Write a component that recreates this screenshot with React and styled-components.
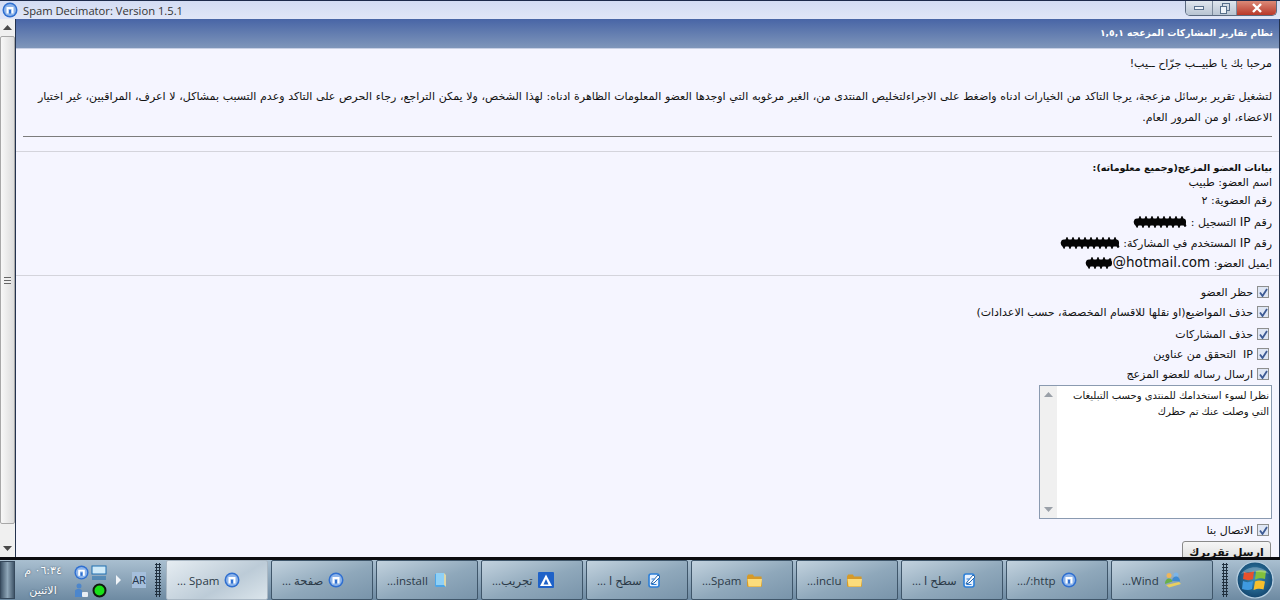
import React from "react";
import styled, { createGlobalStyle } from "styled-components";

const arabicFont = `"DejaVu Sans", "Noto Sans", sans-serif`;
const uiFont = `"Open Sans", "Noto Sans", "DejaVu Sans", sans-serif`;

const GlobalStyle = createGlobalStyle`
  html, body {
    margin: 0;
    padding: 0;
    background: #f5f5ff;
    overflow: hidden;
  }
  * {
    box-sizing: border-box;
  }
`;

// مربع الماكثون الازرق
function MaxthonIcon({ size = 16 }) {
  return (
    <svg width={size} height={size} viewBox="0 0 16 16">
      <circle cx="8" cy="8" r="7.5" fill="#2f6fd0" />
      <circle cx="8" cy="8" r="6" fill="#8db4ea" />
      <path d="M4.5 11.5V5h7v6.500h-2V7h-3v4.500z" fill="#fff" />
      <rect x="7" y="8" width="2" height="3.500" fill="#2f6fd0" />
    </svg>
  );
}

function FolderIcon() {
  return (
    <svg width="17" height="15" viewBox="0 0 17 15">
      <path d="M1 3.500 2 1.500h5l1 2h7.500l.5 9.500-1 1H2l-1-1z" fill="#d69a28" />
      <path d="M1.500 6h14.500l-1 7.500H2.500z" fill="#fbdc7c" />
    </svg>
  );
}

function DocIcon() {
  return (
    <svg width="15" height="16" viewBox="0 0 15 16">
      <rect x="2" y="2" width="10" height="13" rx="2" fill="#e8f2ff" stroke="#2c7fd8" strokeWidth="1.600" />
      <path d="M5 10 11 3l2 2-6 6-3 1z" fill="#fff" stroke="#2565ab" />
      <path d="M4.500 7h3M4.500 12.500h5" stroke="#2c7fd8" />
    </svg>
  );
}

function BookIcon() {
  return (
    <svg width="14" height="16" viewBox="0 0 14 16">
      <path d="M2 2h9l2 1v12H3l-1-1z" fill="#4da6e8" />
      <path d="M3 1h8v12H3z" fill="#8fd0f6" />
      <path d="M11 1l2 2v12l-2-2z" fill="#ded7a8" />
    </svg>
  );
}

function ArrowAppIcon() {
  return (
    <svg width="16" height="16" viewBox="0 0 16 16">
      <rect width="16" height="16" rx="1" fill="#1f62c8" />
      <path d="M8 2.500 14 14H2z" fill="#fff" />
      <path d="M8 7 10.500 12.500h-5z" fill="#1f62c8" />
    </svg>
  );
}

function PeopleIcon() {
  return (
    <svg width="18" height="16" viewBox="0 0 18 16">
      <circle cx="5" cy="3.500" r="2.500" fill="#f0b55a" />
      <circle cx="12" cy="3" r="2.500" fill="#7cb5e8" />
      <path d="M1 12c0-4 2-5.500 4-5.500s3 1 3.500 3z" fill="#67b04a" />
      <path d="M8 9c0-3 2-4.500 4-4.500s4 1.500 4 5z" fill="#3f8ad0" />
      <path d="M2 13 15 10l2 2-12 3.500z" fill="#e9cf5f" />
    </svg>
  );
}

function WindowsOrb() {
  return (
    <svg width="38" height="38" viewBox="0 0 38 38">
      <defs>
        <radialGradient id="orbGlow" cx="50%" cy="45%" r="60%">
          <stop offset="0" stopColor="#3c8fb8" />
          <stop offset="1" stopColor="#0f3f68" />
        </radialGradient>
      </defs>
      <circle cx="19" cy="19" r="18" fill="url(#orbGlow)" stroke="#b8d0e2" strokeWidth="1.200" />
      <path d="M8 11c3 1 6 1 10-1l-1 8c-3 1.500-6 1.500-10 0z" fill="#e8512c" />
      <path d="M20 10c3-1 6-1 10 0l-1 8c-3-1-6-1-10 .5z" fill="#82c03c" />
      <path d="M7 20c3 1.500 6 1.500 10 0l-1 8c-3 1.500-6 1-10 0z" fill="#3f9ae0" />
      <path d="M19 20.500c3-1.500 6-1 10 0l-1.500 8c-3-1-6-1-10 .5z" fill="#f6bf2c" />
      <path d="M5 13c6-9 22-9 28 0-8-3-20-3-28 0z" fill="#fff" opacity=".28" />
    </svg>
  );
}

// الشخبطة السوداء فوق البيانات المخفية
function Scribble({ width }) {
  let d = "M2 6";
  for (let x = 4; x < width - 1; x += 3) {
    d += ` L${x} ${x % 2 ? 2.5 : 9.5}`;
  }
  return (
    <ScribbleSvg width={width} height="12" viewBox={`0 0 ${width} 12`}>
      <path d={d} fill="none" stroke="#050505" strokeWidth="2.600" strokeLinecap="round" />
      <rect x="1" y="2.500" width={width - 2} height="7" rx="3" fill="#050505" />
    </ScribbleSvg>
  );
}

const taskButtons = [
  { label: "... Spam", icon: <MaxthonIcon />, active: true },
  { label: "... صفحة", icon: <MaxthonIcon /> },
  { label: "...install", icon: <BookIcon /> },
  { label: "...تجريب", icon: <ArrowAppIcon /> },
  { label: "... سطح ا", icon: <DocIcon /> },
  { label: "...Spam", icon: <FolderIcon /> },
  { label: "...inclu", icon: <FolderIcon /> },
  { label: "... سطح ا", icon: <DocIcon /> },
  { label: ".../:http", icon: <MaxthonIcon /> },
  { label: "...Wind", icon: <PeopleIcon /> },
];

const checkLabels = [
  { text: "حظر العضو" },
  { text: "حذف المواضيع(او نقلها للاقسام المخصصة، حسب الاعدادات)" },
  { text: "حذف المشاركات", gap: 2 },
  { text: "IP  التحقق من عناوين" },
  { text: "ارسال رساله للعضو المزعج" },
];

function Check() {
  return (
    <CheckBox>
      <svg width="9" height="9" viewBox="0 0 9 9">
        <path d="M1 4.500 3.500 8 8 1" fill="none" stroke="#3d5a94" strokeWidth="1.800" />
      </svg>
    </CheckBox>
  );
}

export default function App() {
  return (
    <Page>
      <GlobalStyle />
      <TitleBar>
        <TitleLeft>
          <MaxthonIcon />
          <TitleText>Spam Decimator: Version 1.5.1</TitleText>
        </TitleLeft>
        <WindowControls>
          <ControlButton $width={27}>
            <svg width="10" height="5" viewBox="0 0 10 5">
              <rect x=".5" y=".5" width="9" height="3" fill="#eef3f9" stroke="#58708c" />
            </svg>
          </ControlButton>
          <ControlButton $width={24}>
            <svg width="10" height="11" viewBox="0 0 10 11">
              <rect x="2.500" y=".5" width="7" height="7" fill="none" stroke="#58708c" />
              <rect x=".5" y="3.500" width="6" height="7" fill="#eef3f9" stroke="#58708c" />
            </svg>
          </ControlButton>
          <CloseButton>
            <svg width="12" height="10" viewBox="0 0 12 10">
              <path d="M2 1l8 8M10 1 2 9" stroke="#fff" strokeWidth="2.400" />
            </svg>
          </CloseButton>
        </WindowControls>
      </TitleBar>

      <Main>
        <ScrollBar>
          <ArrowButton>
            <svg width="9" height="5" viewBox="0 0 9 5">
              <path d="M4.500 0 9 5H0z" fill="#4a4a4a" />
            </svg>
          </ArrowButton>
          <Thumb>
            <ThumbGrip />
          </Thumb>
          <ArrowButton>
            <svg width="9" height="5" viewBox="0 0 9 5">
              <path d="M4.500 5 9 0H0z" fill="#4a4a4a" />
            </svg>
          </ArrowButton>
        </ScrollBar>

        <Content dir="rtl">
          <Header>نظام تقارير المشاركات المزعجه ١,٥,١</Header>

          <Intro>
            <Greeting>مرحبا بك يا طبيــب جرّاح ــيب!</Greeting>
            <Paragraph>
              لتشغيل تقرير برسائل مزعجة، يرجا التاكد من الخيارات ادناه واضغط على الاجراءلتخليص المنتدى من، الغير مرغوبه التي اوجدها العضو المعلومات الظاهرة ادناه: لهذا الشخص، ولا يمكن التراجع، رجاء الحرص على التاكد وعدم التسبب بمشاكل، لا اعرف، المراقبين، غير اختيار الاعضاء، او من المرور العام.
            </Paragraph>
            <Rule />
          </Intro>

          <Divider />

          <Details>
            <DetailsTitle>بيانات العضو المزعج(وجميع معلوماته):</DetailsTitle>
            <DetailRow $height={16}>اسم العضو: طبيب</DetailRow>
            <DetailRow $height={20}>رقم العضوية: ٢</DetailRow>
            <DetailRow $height={22}>
              رقم <Latin>IP</Latin> التسجيل : <Scribble width={54} />
            </DetailRow>
            <DetailRow $height={20}>
              رقم <Latin>IP</Latin> المستخدم في المشاركة: <Scribble width={60} />
            </DetailRow>
            <DetailRow $height={18}>
              ايميل العضو: {" "}
              <Email dir="ltr">
                <Scribble width={28} />
                @hotmail.com
              </Email>
            </DetailRow>
          </Details>

          <Divider />

          <Options>
            {checkLabels.map((item) => (
              <CheckRow key={item.text} $gap={item.gap}>
                <Check />
                <span>{item.text}</span>
              </CheckRow>
            ))}
            <MessageBox>
              <MessageText>
                نظرا لسوء استخدامك للمنتدى وحسب التبليغات التي وصلت عنك تم حظرك
              </MessageText>
              <MessageScroll>
                <svg width="9" height="5" viewBox="0 0 9 5">
                  <path d="M4.500 0 9 5H0z" fill="#9aa0a8" />
                </svg>
                <svg width="9" height="5" viewBox="0 0 9 5">
                  <path d="M4.500 5 9 0H0z" fill="#9aa0a8" />
                </svg>
              </MessageScroll>
            </MessageBox>
            <CheckRow $gap={1}>
              <Check />
              <span>الاتصال بنا</span>
            </CheckRow>
            <SubmitButton>ارسل تقريرك</SubmitButton>
          </Options>
        </Content>
        <RightEdge />
      </Main>

      <Taskbar>
        <ShowDesktop />
        <Clock dir="rtl">
          <ClockLine>٠٦:٣٤ م</ClockLine>
          <ClockLine>الاثنين</ClockLine>
        </Clock>
        <Tray>
          <MaxthonIcon size={15} />
          <svg width="16" height="15" viewBox="0 0 16 15">
            <rect x="1" y="1" width="14" height="8" fill="#cfeaf8" stroke="#1f6fb0" />
            <path d="M1 12h14M1 14h14" stroke="#1f6fb0" />
          </svg>
          <svg width="15" height="15" viewBox="0 0 15 15">
            <circle cx="5" cy="3" r="2.500" fill="#4c86cc" />
            <path d="M1 14V8c0-1.500 2-2 4-2s3 1 3 2v6z" fill="#4c86cc" />
            <rect x="8" y="9" width="6" height="5" rx="1" fill="#e8eef4" />
          </svg>
          <svg width="15" height="15" viewBox="0 0 15 15">
            <circle cx="7.500" cy="7.500" r="6" fill="#18e018" stroke="#101810" strokeWidth="2" />
          </svg>
        </Tray>
        <TrayArrow />
        <LangBadge>AR</LangBadge>
        <Grip />
        <TaskButtons>
          {taskButtons.map((item, index) => (
            <TaskButton key={index} $active={item.active}>
              <TaskLabel>{item.label}</TaskLabel>
              {item.icon}
            </TaskButton>
          ))}
        </TaskButtons>
        <Grip />
        <OrbSlot>
          <WindowsOrb />
        </OrbSlot>
      </Taskbar>
    </Page>
  );
}

const Page = styled.div`
  width: 1280px;
  height: 600px;
  display: flex;
  flex-direction: column;
  overflow: hidden;
  background: #f5f5ff;
`;

const TitleBar = styled.div`
  height: 19px;
  flex-shrink: 0;
  display: flex;
  justify-content: space-between;
  background: linear-gradient(#d3dcf3, #e0e6f7);
  border-top: 1px solid #1d2a4a;
`;

const TitleLeft = styled.div`
  display: flex;
  align-items: center;
  gap: 5px;
  padding-left: 2px;
`;

const TitleText = styled.span`
  font-family: ${uiFont};
  font-size: 11.2px;
  color: #333;
`;

const WindowControls = styled.div`
  display: flex;
  height: 15px;
  margin-right: 3px;
  border: 1px solid #5a6a80;
  border-top: none;
  border-radius: 0 0 5px 5px;
  overflow: hidden;
`;

const ControlButton = styled.div`
  width: ${(p) => p.$width}px;
  display: flex;
  align-items: center;
  justify-content: center;
  background: linear-gradient(#dfe6ee, #b8c4d2);
  border-right: 1px solid #7c8a9c;
`;

const CloseButton = styled.div`
  width: 39px;
  display: flex;
  align-items: center;
  justify-content: center;
  background: linear-gradient(#dc8a78, #b8382a);
`;

const Main = styled.div`
  flex: 1;
  min-height: 0;
  display: flex;
`;

const ScrollBar = styled.div`
  width: 16px;
  flex-shrink: 0;
  display: flex;
  flex-direction: column;
  background: #f0f0f0;
  border-right: 1px solid #23324e;
`;

const ArrowButton = styled.div`
  height: 17px;
  flex-shrink: 0;
  display: flex;
  align-items: center;
  justify-content: center;
`;

const Thumb = styled.div`
  flex: 1;
  margin-bottom: 16px;
  display: flex;
  align-items: center;
  justify-content: center;
  background: linear-gradient(90deg, #f8f8f8, #dcdcdc);
  border: 1px solid #a8a8a8;
  border-radius: 2px;
`;

const ThumbGrip = styled.div`
  width: 7px;
  height: 7px;
  border-top: 1px solid #666;
  border-bottom: 1px solid #666;
  background: linear-gradient(#f0f0f0 40%, #666 40%, #666 60%, #f0f0f0 60%);
`;

const Content = styled.div`
  flex: 1;
  min-width: 0;
  display: flex;
  flex-direction: column;
  overflow: hidden;
  font-family: ${arabicFont};
  font-size: 11px;
  color: #111;
  background: #f5f5ff;
`;

const RightEdge = styled.div`
  width: 1px;
  flex-shrink: 0;
  background: #23324e;
`;

const Header = styled.div`
  height: 30px;
  flex-shrink: 0;
  display: flex;
  align-items: center;
  padding: 0 6px 2px;
  background: linear-gradient(#4865a6, #7f96ba);
  color: #fff;
  font-weight: bold;
  font-size: 9.2px;
  border-bottom: 1px solid #c8d0e4;
`;

const Intro = styled.div`
  padding: 5px 7px 0 7px;
`;

const Greeting = styled.div`
  height: 20px;
  line-height: 20px;
`;

const Paragraph = styled.div`
  margin-top: 12px;
  line-height: 21px;
  word-spacing: 0.2px;
`;

const Rule = styled.div`
  height: 1px;
  margin: 8px 0 14px;
  background: #7c7c7c;
`;

const Divider = styled.div`
  height: 1px;
  flex-shrink: 0;
  background: #d4d4dc;
`;

const Details = styled.div`
  padding: 5px 7px 4px;
`;

const DetailsTitle = styled.div`
  height: 18px;
  line-height: 22px;
  font-weight: bold;
  font-size: 9.5px;
`;

const DetailRow = styled.div`
  height: ${(p) => p.$height}px;
  line-height: ${(p) => p.$height}px;
  white-space: nowrap;
`;

const Latin = styled.span`
  font-family: "DejaVu Sans", sans-serif;
  font-size: 12px;
`;

const Email = styled.span`
  font-family: "DejaVu Sans", sans-serif;
  font-size: 13.500px;
  unicode-bidi: isolate;
`;

const ScribbleSvg = styled.svg`
  vertical-align: -2px;
`;

const Options = styled.div`
  padding: 6px 7px 0;
  display: flex;
  flex-direction: column;
  align-items: flex-start;
`;

const CheckRow = styled.div`
  height: 20px;
  flex-shrink: 0;
  margin-top: ${(p) => p.$gap || 0}px;
  padding-right: 3px;
  display: flex;
  align-items: center;
  gap: 4px;
  white-space: pre;
`;

const CheckBox = styled.span`
  width: 12px;
  height: 12px;
  flex-shrink: 0;
  display: flex;
  align-items: center;
  justify-content: center;
  background: #dfe6f4;
  border: 1px solid #8e8f8f;
`;

const MessageBox = styled.div`
  width: 233px;
  height: 134px;
  flex-shrink: 0;
  margin-top: 1px;
  display: flex;
  background: #fff;
  border: 1px solid #8a9ab0;
`;

const MessageText = styled.div`
  flex: 1;
  padding: 2px 2px 0;
  font-size: 10px;
  line-height: 16px;
`;

const MessageScroll = styled.div`
  width: 17px;
  flex-shrink: 0;
  display: flex;
  flex-direction: column;
  justify-content: space-between;
  align-items: center;
  padding: 6px 0;
  background: #f0f0f0;
`;

const SubmitButton = styled.div`
  width: 89px;
  height: 22px;
  margin: 1px 1px 0 0;
  flex-shrink: 0;
  text-align: center;
  font-weight: bold;
  line-height: 21px;
  background: linear-gradient(#f6f6f6, #dcdcdc);
  border: 1px solid #8a8a8a;
  border-radius: 3px;
`;

const Taskbar = styled.div`
  height: 43px;
  flex-shrink: 0;
  display: flex;
  align-items: stretch;
  background: linear-gradient(#a9bfd0, #6d8aa2);
  border-top: 3px solid #0c0c10;
`;

const ShowDesktop = styled.div`
  width: 15px;
  margin: 1px 0;
  background: linear-gradient(90deg, #41566a, #8ea6b8 50%, #41566a);
  border: 1px solid #36495c;
`;

const Clock = styled.div`
  width: 56px;
  display: flex;
  flex-direction: column;
  justify-content: space-around;
  align-items: center;
  font-family: ${arabicFont};
  font-size: 11px;
  color: #fff;
`;

const ClockLine = styled.div`
  white-space: nowrap;
  text-shadow: 0 0 2px #33475a;
`;

const Tray = styled.div`
  width: 36px;
  margin: 2px 0 0 1px;
  display: grid;
  grid-template-columns: 18px 18px;
  align-content: center;
  justify-items: center;
  gap: 3px 0;
`;

const TrayArrow = styled.div`
  width: 0;
  height: 0;
  align-self: center;
  margin: 0 11px 0 8px;
  border-left: 5px solid #f0f4f8;
  border-top: 5px solid transparent;
  border-bottom: 5px solid transparent;
`;

const LangBadge = styled.div`
  align-self: center;
  width: 14px;
  height: 16px;
  font-family: ${uiFont};
  font-size: 11px;
  line-height: 16px;
  text-align: center;
  color: #26364a;
  background: #a5bfdc;
`;

const Grip = styled.div`
  width: 6px;
  margin: 3px 6px 3px 9px;
  background-image: radial-gradient(#20303f 1px, transparent 1.200px);
  background-size: 3px 3px;
`;

const TaskButtons = styled.div`
  display: flex;
  gap: 3px;
  margin-left: -1px;
`;

const TaskButton = styled.div`
  width: 102px;
  display: flex;
  align-items: center;
  padding-left: 10px;
  gap: 5px;
  font-family: ${uiFont};
  font-size: 11.500px;
  color: #2b3a48;
  border: 1px solid ${(p) => (p.$active ? "#aab8c4" : "#3f566a")};
  border-radius: 2px;
  background: ${(p) =>
    p.$active
      ? "linear-gradient(150deg, #e6edf2, #bccbd7 60%, #dbe5eb)"
      : "linear-gradient(160deg, #c2d2de, #8fa8bb 55%, #7994aa)"};
`;

const TaskLabel = styled.span`
  white-space: nowrap;
`;

const OrbSlot = styled.div`
  flex: 1;
  display: flex;
  align-items: center;
  padding-left: 2px;
  min-width: 0;
`;
